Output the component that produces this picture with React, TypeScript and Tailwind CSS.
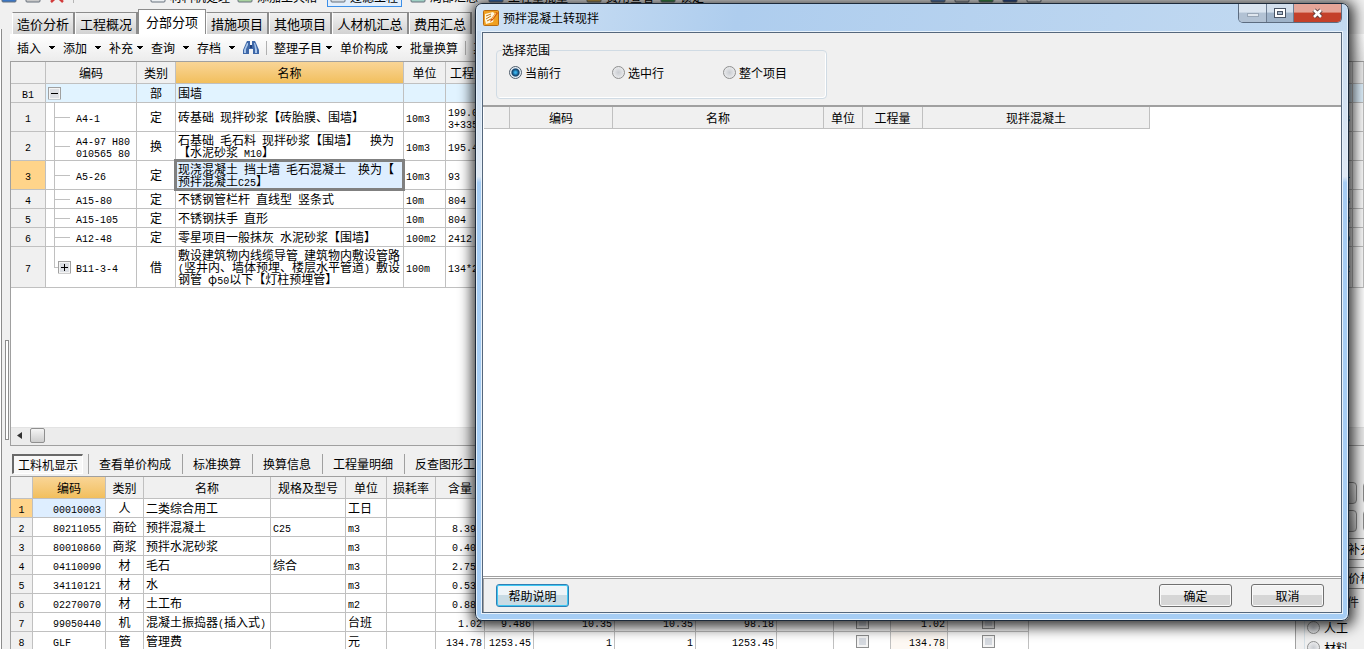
import { useState } from "react";
import type { ReactNode } from "react";
import clsx from "clsx";

type ItemRow = {
  no: string;
  code: string[];
  kind: string;
  name: string[];
  unit: string;
  amount: string[];
  tail: string;
  height: string;
  node: "root" | "leaf" | "closed";
};

const items: ItemRow[] = [
  { no: "B1", code: [], kind: "部", name: ["围墙"], unit: "", amount: [], tail: "", height: "h-[19px]", node: "root" },
  { no: "1", code: ["A4-1"], kind: "定", name: ["砖基础 现拌砂浆【砖胎膜、围墙】"], unit: "10m3", amount: ["199.03", "3+335.2"], tail: "3", height: "h-[29px]", node: "leaf" },
  { no: "2", code: ["A4-97 H80", "010565 80"], kind: "换", name: ["石基础 毛石料 现拌砂浆【围墙】  换为", "【水泥砂浆 M10】"], unit: "10m3", amount: ["195.4"], tail: "", height: "h-[29px]", node: "leaf" },
  { no: "3", code: ["A5-26"], kind: "定", name: ["现浇混凝土 挡土墙 毛石混凝土  换为【", "预拌混凝土C25】"], unit: "10m3", amount: ["93"], tail: "4", height: "h-[29px]", node: "leaf" },
  { no: "4", code: ["A15-80"], kind: "定", name: ["不锈钢管栏杆 直线型 竖条式"], unit: "10m", amount: ["804"], tail: "8", height: "h-[19px]", node: "leaf" },
  { no: "5", code: ["A15-105"], kind: "定", name: ["不锈钢扶手 直形"], unit: "10m", amount: ["804"], tail: "3", height: "h-[19px]", node: "leaf" },
  { no: "6", code: ["A12-48"], kind: "定", name: ["零星项目一般抹灰 水泥砂浆【围墙】"], unit: "100m2", amount: ["2412"], tail: "0", height: "h-[19px]", node: "leaf" },
  { no: "7", code: ["B11-3-4"], kind: "借", name: ["敷设建筑物内线缆导管 建筑物内敷设管路", "(竖井内、墙体预埋、楼层水平管道) 敷设", "钢管 φ50以下【灯柱预埋管】"], unit: "100m", amount: ["134*2"], tail: "2", height: "h-[41px]", node: "closed" },
];

const resources = [
  ["00010003", "人", "二类综合用工", "", "工日", "", "", "", "", "", ""],
  ["80211055", "商砼", "预拌混凝土", "C25", "m3", "", "8.395", "", "", "", ""],
  ["80010860", "商浆", "预拌水泥砂浆", "", "m3", "", "0.403", "", "", "", ""],
  ["04110090", "材", "毛石", "综合", "m3", "", "2.754", "", "", "", ""],
  ["34110121", "材", "水", "", "m3", "", "0.533", "", "", "", ""],
  ["02270070", "材", "土工布", "", "m2", "", "0.885", "", "", "", ""],
  ["99050440", "机", "混凝土振捣器(插入式)", "", "台班", "", "1.02", "9.486", "10.35", "10.35", "98.18"],
  ["GLF", "管", "管理费", "", "元", "", "134.78", "1253.45", "1", "1", "1253.45"],
];

const tabs = ["造价分析", "工程概况", "分部分项", "措施项目", "其他项目", "人材机汇总", "费用汇总"];
const detailTabs = ["工料机显示", "查看单价构成", "标准换算", "换算信息", "工程量明细", "反查图形工程量"];
const scopes = ["当前行", "选中行", "整个项目"];

const cell = "border-r border-b border-[#c0c0c0] p-0";
const head = "border-r border-b border-[#c0c0c0] bg-[#f0f0f0] p-0 font-normal text-center";
const activeHead = "border-r border-b border-[#c0c0c0] bg-linear-to-b from-[#f9d596] to-[#f2bf5c] p-0 font-normal text-center";

// Latin runs take half the width of a Chinese character
function Txt({ children }: { children: string }) {
  return (
    <>
      {children.split(/([\x20-\x7e]+)/).map((part, i) =>
        i % 2 ? (
          <span key={i} className="font-['Liberation_Mono',monospace] text-[10px] leading-0">
            {part}
          </span>
        ) : (
          part
        )
      )}
    </>
  );
}

function Lines({ lines }: { lines: string[] }) {
  return (
    <>
      {lines.map((line) => (
        <div key={line} className="h-3 whitespace-pre">
          <Txt>{line}</Txt>
        </div>
      ))}
    </>
  );
}

function Caret() {
  return (
    <svg width="6" height="4" viewBox="0 0 6 4" className="shrink-0" shapeRendering="crispEdges">
      <path d="M0 0h6v1H5v1H4v1H2V2H1V1H0z" fill="#000" />
    </svg>
  );
}

function ToolItem({ label, tight }: { label: string; tight?: boolean }) {
  return (
    <button type="button" className={clsx("mr-2 flex shrink-0 items-center", tight ? "gap-1" : "gap-2")}>
      {label}
      <Caret />
    </button>
  );
}

function NodeBox({ open }: { open: boolean }) {
  return (
    <svg width="13" height="13" viewBox="0 0 13 13" shapeRendering="crispEdges">
      <rect x="0.5" y="0.5" width="12" height="12" fill="#f4f4f4" stroke="#a0a0a0" />
      <rect x="2" y="2" width="9" height="9" fill="#dcdfe4" />
      <path d={open ? "M3 6h7v1H3z" : "M3 6h7v1H3zM6 3h1v7H6z"} fill="#000" />
    </svg>
  );
}

function TreeMark({ node }: { node: ItemRow["node"] }) {
  if (node === "root") {
    return (
      <button type="button" aria-label="折叠" className="absolute top-1/2 left-[2px] -translate-y-1/2">
        <NodeBox open />
      </button>
    );
  }
  return (
    <>
      <span className={clsx("absolute top-0 left-2 w-px bg-[#c0c0c0]", node === "leaf" ? "-bottom-px" : "bottom-1/2")} />
      <span className="absolute top-1/2 left-2 h-px w-4 bg-[#c0c0c0]" />
      {node === "closed" && (
        <button type="button" aria-label="展开" className="absolute top-1/2 left-3 -translate-y-1/2">
          <NodeBox open={false} />
        </button>
      )}
    </>
  );
}

function Binoculars() {
  return (
    <svg width="16" height="15" viewBox="0 0 16 15">
      <path d="M3 3l1-2h3v4h2V1h3l1 2 3 7v4h-6V9H6v5H0v-4z" fill="#3f68a8" />
      <path d="M4 3h1v2L3 9v4H1v-3zM11 3h1l1 3 1 4v3h-2V9z" fill="#a9c6ea" />
      <path d="M7 5h2v3H7z" fill="#1f3f78" />
    </svg>
  );
}

function BarIcon({ color }: { color: string }) {
  return (
    <svg width="16" height="12" viewBox="0 0 16 12" className="shrink-0">
      <rect x="1" y="1" width="14" height="10" rx="1" fill={color} stroke="#66707c" />
      <path d="M2 8h12" stroke="#fff" />
    </svg>
  );
}

function MainToolbar() {
  return (
    <div className="flex h-[9px] items-end overflow-hidden whitespace-nowrap">
      <div className="mb-[6px] flex w-full items-end">
        <div className="flex w-[150px] shrink-0 items-end gap-2 pl-px">
          <BarIcon color="#3b76c4" />
          <BarIcon color="#c9c9c9" />
          <svg width="16" height="12" viewBox="0 0 16 12">
            <path d="M2 0l12 11M14 0L2 11" stroke="#d23a3a" strokeWidth="2.5" />
          </svg>
          <span className="h-3 w-px bg-[#b5b5b5]" />
        </div>
        <button type="button" className="flex w-[87px] shrink-0 items-end gap-1">
          <BarIcon color="#eceff2" />
          材料机处理
        </button>
        <button type="button" className="flex w-[90px] shrink-0 items-end gap-1">
          <BarIcon color="#a9d3a0" />
          添加工具箱
        </button>
        <button type="button" className="-mb-1 flex w-[75px] shrink-0 items-end gap-1 border border-[#3c8fe8] bg-[#e3effc] px-0.5 pb-[3px]">
          <BarIcon color="#d8dee4" />
          过滤工程
        </button>
        <button type="button" className="ml-2 flex w-[78px] shrink-0 items-end gap-1">
          <BarIcon color="#9fd0c4" />
          局部汇总
        </button>
        <button type="button" className="flex w-[98px] shrink-0 items-end gap-1">
          <BarIcon color="#3b76c4" />
          工程量批量
        </button>
        <button type="button" className="flex w-[74px] shrink-0 items-end gap-1">
          <BarIcon color="#c9a24a" />
          费用查看
        </button>
        <button type="button" className="flex w-[270px] shrink-0 items-end gap-1">
          <BarIcon color="#3f8f4a" />
          锁定
        </button>
        <div className="flex items-end gap-2">
          <BarIcon color="#5b7fb5" />
          <BarIcon color="#c9c9c9" />
          <BarIcon color="#3f8f4a" />
          <BarIcon color="#2f4f8f" />
          <BarIcon color="#f0f0f0" />
        </div>
      </div>
    </div>
  );
}

function ItemsTable() {
  return (
    <table className="w-full table-fixed border-separate border-spacing-0 bg-white">
      <colgroup>
        <col className="w-[35px]" />
        <col className="w-[91px]" />
        <col className="w-[39px]" />
        <col className="w-[228px]" />
        <col className="w-[42px]" />
        <col className="w-[60px]" />
        <col />
        <col className="w-[11px]" />
      </colgroup>
      <thead>
        <tr className="h-[22px]">
          <th className={head}></th>
          <th className={head}>编码</th>
          <th className={head}>类别</th>
          <th className={activeHead}>名称</th>
          <th className={head}>单位</th>
          <th className={clsx(head, "whitespace-nowrap")}>
            <span className="block pl-1 text-left">工程量</span>
          </th>
          <th className={head}></th>
          <th className={head}></th>
        </tr>
      </thead>
      <tbody>
        {items.map((row) => (
          <tr key={row.no} className={clsx(row.height, row.node === "root" && "bg-[#e1f3ff]")}>
            <td className={clsx(cell, "text-center", row.no === "3" ? "bg-[#ffd48a]" : "bg-[#f0f0f0]")}>
              <Txt>{row.no}</Txt>
            </td>
            <td className={clsx(cell, "relative")}>
              <TreeMark node={row.node} />
              <div className="pl-[30px]">
                <Lines lines={row.code} />
              </div>
            </td>
            <td className={clsx(cell, "text-center")}>{row.kind}</td>
            <td className={clsx(cell, "relative pl-0.5", row.no === "3" && "bg-[#deeeff]")}>
              <Lines lines={row.name} />
              {row.no === "3" && <span className="absolute -inset-0.5 z-10 border-3 border-[#808080]" />}
            </td>
            <td className={clsx(cell, "pl-0.5")}>
              <Txt>{row.unit}</Txt>
            </td>
            <td className={clsx(cell, "pl-0.5")}>
              <Lines lines={row.amount} />
            </td>
            <td className={clsx(cell, "pr-0.5 text-right")}>
              <Txt>{row.tail}</Txt>
            </td>
            <td className={cell}></td>
          </tr>
        ))}
      </tbody>
    </table>
  );
}

function Check({ label }: { label: string }) {
  return (
    <input
      type="checkbox"
      aria-label={label}
      className="mx-auto block size-[13px] appearance-none border border-[#8e8f8f] bg-[#d5d9df] shadow-[inset_0_0_0_2px_#f4f4f4]"
    />
  );
}

function ResourceTable() {
  return (
    <table className="w-[1018px] table-fixed border-separate border-spacing-0 bg-white">
      <colgroup>
        <col className="w-[22px]" />
        <col className="w-[73px]" />
        <col className="w-[38px]" />
        <col className="w-[127px]" />
        <col className="w-[75px]" />
        <col className="w-[41px]" />
        <col className="w-[49px]" span={3} />
        <col className="w-[81px]" span={3} />
        <col className="w-[57px]" span={3} />
        <col className="w-[81px]" />
      </colgroup>
      <thead>
        <tr className="h-[22px]">
          <th className={head}></th>
          <th className={activeHead}>编码</th>
          {["类别", "名称", "规格及型号", "单位", "损耗率", "含量"].map((title) => (
            <th key={title} className={head}>
              {title}
            </th>
          ))}
          <th className={head} colSpan={8}></th>
        </tr>
      </thead>
      <tbody>
        {resources.map((row, index) => (
          <tr key={row[0]} className="h-[19px]">
            <td className={clsx(cell, "text-center", index === 0 ? "bg-[#ffd48a]" : "bg-[#f0f0f0]")}>
              <Txt>{String(index + 1)}</Txt>
            </td>
            {row.map((value, i) => (
              <td
                key={i}
                className={clsx(
                  cell,
                  "whitespace-nowrap",
                  i === 0 && "pl-5",
                  i === 0 && index === 0 && "bg-[#deeeff]",
                  i === 1 && "text-center",
                  i > 1 && i < 6 && "pl-0.5",
                  i >= 6 && "pr-0.5 text-right"
                )}
              >
                <Txt>{value}</Txt>
              </td>
            ))}
            <td className={cell}></td>
            <td className={cell}>
              <Check label={`是否暂估 ${index + 1}`} />
            </td>
            <td className={clsx(cell, "bg-[#fdf8f3] pr-0.5 text-right")}>
              <Txt>{row[6]}</Txt>
            </td>
            <td className={cell}>
              <Check label={`锁定数量 ${index + 1}`} />
            </td>
          </tr>
        ))}
      </tbody>
    </table>
  );
}

const radioClass =
  "m-0 size-[13px] shrink-0 appearance-none rounded-full border border-[#8e8f8f] bg-radial from-[#c9ccd1] to-[#f6f6f6] checked:border-[#4d5c6b] checked:from-[#39b2ec] checked:from-10% checked:via-[#0f3f68] checked:via-45% checked:to-[#e8f0f6] checked:to-60%";

function SidePanel() {
  return (
    <div className="ml-2 flex w-[60px] shrink-0 flex-col overflow-hidden border-l border-[#d5dfe5] whitespace-nowrap">
      <div className="mt-9 flex shrink-0 gap-1.5">
        <button type="button" aria-label="上移" className="h-[22px] w-[52px] shrink-0 rounded-sm border border-[#8a8a8a] bg-linear-to-b from-[#f2f2f2] to-[#cfcfcf]" />
        <button type="button" aria-label="插入行" className="h-[22px] w-[52px] shrink-0 rounded-sm border border-[#8a8a8a] bg-[#f2f2f2]" />
      </div>
      <div className="mt-1.5 flex shrink-0 gap-1.5">
        <button type="button" aria-label="下移" className="h-[22px] w-[52px] shrink-0 rounded-sm border border-[#8a8a8a] bg-linear-to-b from-[#f2f2f2] to-[#cfcfcf]" />
        <button type="button" aria-label="删除行" className="h-[22px] w-[52px] shrink-0 rounded-sm border border-[#8a8a8a] bg-[#f2f2f2]" />
      </div>
      <button type="button" className="mt-1.5 h-[22px] w-24 shrink-0 border border-[#8a8a8a] pl-[42px] text-left">
        补充
      </button>
      <button type="button" className="mt-[7px] h-[22px] w-24 shrink-0 border border-[#8a8a8a] pl-[42px] text-left">
        价格
      </button>
      <div className="mt-[7px] shrink-0 pl-[42px] text-[#222]">件</div>
      <label className="mt-[13px] flex shrink-0 items-center gap-1 pl-0.5">
        <input type="radio" name="resource" className={radioClass} />
        人工
      </label>
      <label className="mt-[7px] flex shrink-0 items-center gap-1 pl-0.5">
        <input type="radio" name="resource" className={radioClass} />
        材料
      </label>
    </div>
  );
}

function Workspace() {
  return (
    <div className="flex h-full flex-col">
      <MainToolbar />
      <div className="flex min-h-0 flex-1">
        <div className="mt-5 flex w-2.5 shrink-0 flex-col border-l border-white">
          <div className="flex flex-1 flex-col border-l border-[#8c8c8c] pt-[311px] pl-[3px]">
            <span className="h-[100px] w-1 border border-[#8c8c8c] bg-white" />
          </div>
        </div>
        <div className="flex min-w-0 flex-1 flex-col">
          <nav className="flex h-[25px] items-end overflow-hidden pl-0.5 text-[13px]">
            {tabs.map((tab) => (
              <button
                key={tab}
                type="button"
                className={
                  tab === "分部分项"
                    ? "h-[25px] w-[68px] shrink-0 border border-b-0 border-[#8c8c8c] bg-white"
                    : clsx(
                        "h-[22px] shrink-0 border-t border-r-2 border-l border-t-[#8c8c8c] border-r-[#8c8c8c] border-l-white bg-linear-to-b from-[#f2f2f2] to-[#d2d2d2]",
                        tab === "人材机汇总" ? "w-[77px]" : "w-[63px]"
                      )
                }
              >
                {tab}
              </button>
            ))}
          </nav>
          <div className="flex h-[27px] items-center overflow-hidden bg-linear-to-b from-white to-[#ececec] pl-[7px] whitespace-nowrap">
            <ToolItem label="插入" />
            <ToolItem label="添加" />
            <ToolItem label="补充" tight />
            <ToolItem label="查询" />
            <ToolItem label="存档" />
            <button type="button" aria-label="查找" className="shrink-0">
              <Binoculars />
            </button>
            <span className="mx-[7px] h-3.5 w-px shrink-0 bg-[#b0b0b0]" />
            <ToolItem label="整理子目" tight />
            <ToolItem label="单价构成" />
            <button type="button" className="shrink-0">批量换算</button>
            <span className="mx-[7px] h-3.5 w-px shrink-0 bg-[#b0b0b0]" />
            <button type="button" className="shrink-0">其他</button>
          </div>
          <div className="flex min-h-0 flex-1 flex-col border-t border-b border-l border-[#a0a0a0] bg-white">
            <ItemsTable />
            <div className="mt-auto flex h-[18px] items-start border-t border-[#e3e3e3] bg-[#ececec] pl-1.5">
              <svg width="5" height="7" viewBox="0 0 5 7" className="mt-1">
                <path d="M5 0v7L0 3.5z" fill="#333" />
              </svg>
              <span className="ml-2 h-[15px] w-[15px] rounded-xs border border-[#8f8f8f] bg-linear-to-b from-[#f5f5f5] to-[#cdcdcd]" />
            </div>
          </div>
          <div className="flex h-[203px] shrink-0">
            <div className="flex min-w-0 flex-1 flex-col border-r border-[#a0a0a0]">
              <nav className="flex h-[30px] shrink-0 items-center overflow-hidden pt-1.5 pl-0.5 whitespace-nowrap">
                {detailTabs.map((tab, index) => (
                  <div key={tab} className="flex shrink-0 items-center">
                    {index > 0 && <span className={clsx("mr-[10px] h-5 w-px bg-[#a0a0a0]", index > 1 ? "ml-[11px]" : "ml-[5px]")} />}
                    <button
                      type="button"
                      className={
                        index === 0
                          ? "h-5 w-[71px] border-t-2 border-l-2 border-r border-b border-t-[#696969] border-l-[#696969] border-r-white border-b-white bg-[#f8f8f8]"
                          : "h-5"
                      }
                    >
                      {tab}
                    </button>
                  </div>
                ))}
              </nav>
              <div className="min-h-0 flex-1 overflow-hidden border-t border-l border-[#a0a0a0] bg-white">
                <ResourceTable />
              </div>
            </div>
            <SidePanel />
          </div>
        </div>
      </div>
    </div>
  );
}

function DialogButton({ children, primary }: { children: ReactNode; primary?: boolean }) {
  return (
    <button
      type="button"
      className={clsx(
        "h-[23px] w-[73px] rounded-[3px] border",
        primary
          ? "border-[#2f7fb5] bg-linear-to-b from-[#eef4f8] from-50% to-[#c9dbe4] to-50% shadow-[inset_0_0_0_1px_#3fc8f2]"
          : "border-[#707070] bg-linear-to-b from-[#f2f2f2] from-50% to-[#d6d6d6] to-50% shadow-[inset_0_0_0_1px_#fafafa]"
      )}
    >
      {children}
    </button>
  );
}

function WindowButtons() {
  return (
    <div className="mr-px flex h-[19px] overflow-hidden rounded-b-[5px] border border-t-0 border-[#5c6c80]">
      <button type="button" aria-label="最小化" className="flex w-7 items-end justify-center border-r border-[#6d7d92] bg-linear-to-b from-[#dbe5f0] from-45% to-[#b2c2d4] to-50% pb-[5px]">
        <span className="h-1 w-3 border border-[#98a6b6] bg-[#dfe6ee]" />
      </button>
      <button type="button" aria-label="最大化" className="flex w-[27px] items-center justify-center border-r border-[#6d7d92] bg-linear-to-b from-[#d3dfec] from-45% to-[#9fb3c9] to-50%">
        <svg width="12" height="10" viewBox="0 0 12 10" shapeRendering="crispEdges">
          <rect x="0.5" y="0.5" width="11" height="9" fill="#fff" stroke="#4a5566" />
          <rect x="3.5" y="3.5" width="5" height="3" fill="#a9bacd" stroke="#4a5566" />
        </svg>
      </button>
      <button type="button" aria-label="关闭" className="flex w-[47px] items-center justify-center bg-linear-to-b from-[#e5a598] from-45% to-[#c4402a] to-50%">
        <svg width="13" height="11" viewBox="0 0 13 11">
          <path d="M3 2l7 7M10 2L3 9" stroke="#5b3a3a" strokeWidth="4.5" />
          <path d="M3 2l7 7M10 2L3 9" stroke="#fff" strokeWidth="2.6" />
        </svg>
      </button>
    </div>
  );
}

function ConvertDialog() {
  const [scope, setScope] = useState("当前行");

  return (
    <div
      role="dialog"
      aria-labelledby="dialog-title"
      className="absolute top-[3px] right-[15px] bottom-7 left-[475px] z-20 flex flex-col rounded-[7px] border border-[#1c2a3a] bg-linear-to-b from-[#c4d9ef] via-[#dfe9f4] via-28% to-[#a6cdf4] to-29% px-[5px] pb-1.5 shadow-[1px_2px_14px_4px_rgba(0,0,0,0.8),inset_0_0_0_1px_#e6f1fb]"
    >
      <div className="-mx-1 flex h-[27px] shrink-0 justify-between rounded-t-[6px] bg-linear-100 from-[#d0e2f4] via-[#aecdee] via-30% to-[#c3daf1] pr-1 pl-1.5">
        <div className="flex items-center gap-1">
          <svg width="16" height="16" viewBox="0 0 16 16">
            <rect x="0.5" y="0.5" width="15" height="15" rx="1" fill="#f0a020" stroke="#b86a10" />
            <path d="M2 4l8-2 2 2-2 8-7 2-1-4z" fill="#fff6dc" />
            <path d="M3 6l5-2M3 9l5-3M4 11l4-2" stroke="#c47a1c" />
            <path d="M13 2L8 9l-1 3 3-2 5-7z" fill="#d4570f" />
            <path d="M13 3L9 9" stroke="#ffd56a" />
          </svg>
          <h1 id="dialog-title">预拌混凝土转现拌</h1>
        </div>
        <WindowButtons />
      </div>
      <div className="flex min-h-0 flex-1 flex-col border border-[#e8f2fb]">
        <div className="flex min-h-0 flex-1 flex-col border border-[#55677c] bg-white">
          <div className="flex h-[74px] shrink-0 items-start border-b-2 border-[#a0a0a0] bg-[#f0f0f0]">
            <fieldset className="mt-[11px] ml-[13px] h-[55px] w-[331px] rounded-sm border border-[#d0dbe4] shadow-[inset_-1px_-1px_0_#fff]">
              <legend className="ml-[5px] leading-3">选择范围</legend>
              <div className="grid grid-cols-[103px_111px_1fr] pt-[10px] pl-3">
                {scopes.map((item) => (
                  <label key={item} className="flex items-center gap-[3px]">
                    <input type="radio" name="scope" checked={scope === item} onChange={() => setScope(item)} className={radioClass} />
                    {item}
                  </label>
                ))}
              </div>
            </fieldset>
          </div>
          <div className="min-h-0 flex-1 pl-px">
            <table className="w-[666px] table-fixed border-separate border-spacing-0">
              <colgroup>
                <col className="w-[26px]" />
                <col className="w-[103px]" />
                <col className="w-[211px]" />
                <col className="w-[39px]" />
                <col className="w-[60px]" />
                <col />
              </colgroup>
              <thead>
                <tr className="h-[22px]">
                  {["", "编码", "名称", "单位", "工程量", "现拌混凝土"].map((title) => (
                    <th key={title} className={head}>
                      {title}
                    </th>
                  ))}
                </tr>
              </thead>
            </table>
          </div>
          <div className="flex h-9 shrink-0 flex-col border-t border-[#a0a0a0] pt-px">
            <div className="flex flex-1 items-center justify-between border-t border-l border-[#a0a0a0] bg-[#f0f0f0] pr-[17px] pl-3">
              <DialogButton primary>帮助说明</DialogButton>
              <div className="flex gap-[19px]">
                <DialogButton>确定</DialogButton>
                <DialogButton>取消</DialogButton>
              </div>
            </div>
          </div>
        </div>
      </div>
    </div>
  );
}

export default function App() {
  return (
    <main className="relative h-screen overflow-hidden bg-[#f0f0f0] font-['Noto_Sans_CJK_SC',sans-serif] text-[12px] leading-3 text-black [text-spacing-trim:space-all]">
      <Workspace />
      <ConvertDialog />
    </main>
  );
}
